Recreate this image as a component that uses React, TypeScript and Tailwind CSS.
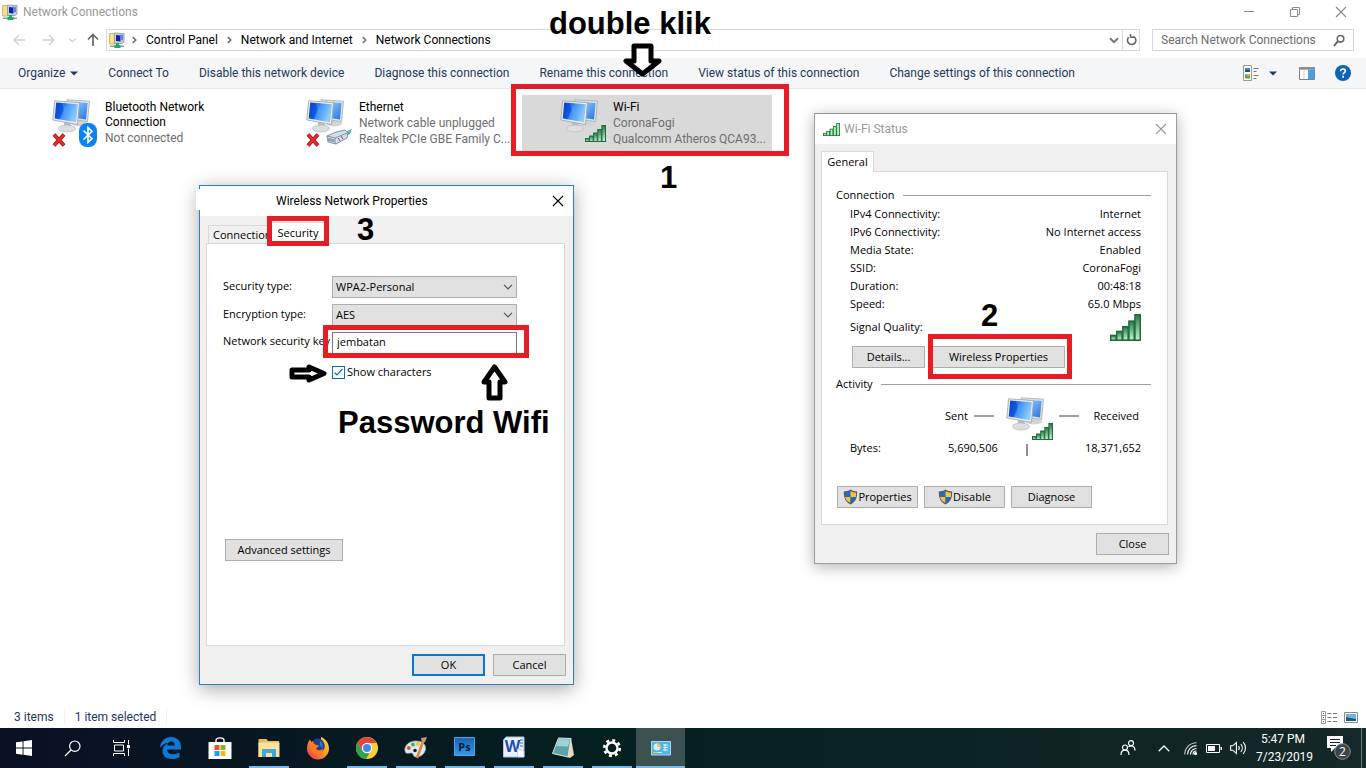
import React, { FC, ReactNode, useState } from "react";

const commands = [
  "Connect To",
  "Disable this network device",
  "Diagnose this connection",
  "Rename this connection",
  "View status of this connection",
  "Change settings of this connection",
];

const crumbs = ["Control Panel", "Network and Internet", "Network Connections"];

const statusRows = [
  ["IPv4 Connectivity:", "Internet"],
  ["IPv6 Connectivity:", "No Internet access"],
  ["Media State:", "Enabled"],
  ["SSID:", "CoronaFogi"],
  ["Duration:", "00:48:18"],
  ["Speed:", "65.0 Mbps"],
];

/* ---------- icons ---------- */

const FolderNetIcon = () => (
  <svg width="17" height="17" viewBox="0 0 17 17">
    <path d="M.5 1.500h5l1 1v9.500h-6z" fill="#f7e08b" stroke="#c9a94a" strokeWidth=".8" />
    <path d="M5.500 1l9.500.5v8.500l-2 1.500H5.500z" fill="#c9cfdc" stroke="#8790a6" strokeWidth=".8" />
    <path d="M7 3l4.500.4v6L7 9z" fill="#1422a0" />
    <path d="M11 2.500l3 .4v5l-2.500.6z" fill="#5c86dd" />
    <path d="M1 13.500h14v1.500H1z" fill="#8d9f98" />
    <path d="M7 11h3v2h1.500v3h-6v-3H7z" fill="#1fa866" />
  </svg>
);

const Monitors = () => (
  <svg width="40" height="36" viewBox="0 0 40 36">
    <defs>
      <linearGradient id="screenFront" x1="0" y1="0" x2="1" y2=".35">
        <stop offset="0" stopColor="#0a3fc0" />
        <stop offset=".42" stopColor="#0f5ae6" />
        <stop offset=".5" stopColor="#3f93fa" />
        <stop offset="1" stopColor="#8ccbff" />
      </linearGradient>
      <linearGradient id="screenBack" x1="0" y1="0" x2="1" y2="1">
        <stop offset="0" stopColor="#a5d8ff" />
        <stop offset="1" stopColor="#2474e0" />
      </linearGradient>
    </defs>
    <ellipse cx="28" cy="24.500" rx="8" ry="3" fill="#d4d4d4" />
    <path d="M15 .8L37.500 2.200L35.500 22.500L15 20z" fill="#e2e5e8" stroke="#a5a9ad" strokeWidth=".8" />
    <path d="M17 2.600l18.600 1.300L34 20.500 17 18z" fill="url(#screenBack)" />
    <path d="M12 23l7 1.500v5h-7z" fill="#b8bbbe" />
    <ellipse cx="15" cy="29.500" rx="8.500" ry="3.500" fill="#dcdedf" stroke="#b7b9ba" strokeWidth=".7" />
    <path d="M2.600 1.800L27.500 3.600 25.500 25.500.8 21z" fill="#eceeef" stroke="#9ca0a4" strokeWidth=".8" />
    <path d="M4.200 3.600l21.600 1.600-1.700 18L2.700 19.500z" fill="url(#screenFront)" />
    <path d="M10 4l4 17.500 3 .5L13.500 4.200z" fill="#5aa6ff" opacity=".4" />
  </svg>
);

const SignalBars: FC<{ width: number; height: number; small?: boolean }> = ({ width, height, small }) => (
  <svg width={width} height={height} viewBox="0 0 21 17" preserveAspectRatio="none">
    <defs>
      <linearGradient id="barFill" x1="0" y1="0" x2="0" y2="1">
        <stop offset="0" stopColor="#2a7a4b" />
        <stop offset="1" stopColor="#c5f5cf" />
      </linearGradient>
    </defs>
    {[3, 5.5, 8.5, 12, 16].map((h, i) => (
      <rect
        key={h}
        x={0.5 + i * 4.1}
        y={16.5 - h}
        width="3.6"
        height={h}
        fill={small ? "#a9f0b5" : "url(#barFill)"}
        stroke="#1d6b3c"
        strokeWidth="1"
      />
    ))}
  </svg>
);

const RedCross = () => (
  <svg width="14" height="14" viewBox="0 0 14 14">
    <path d="M2 1.500L12 12.500M12 1.500L2 12.500" stroke="#8f0d12" strokeWidth="3.800" />
    <path d="M2 1.500L12 12.500M12 1.500L2 12.500" stroke="#ec2a2a" strokeWidth="2.600" />
  </svg>
);

const BluetoothIcon = () => (
  <svg width="18" height="24" viewBox="0 0 18 24">
    <rect width="18" height="24" rx="8" fill="#0a84f4" />
    <path d="M4.500 7.500l8.500 8.200-4 3.800v-15l4 3.800L4.500 16.500" fill="none" stroke="#fff" strokeWidth="1.600" />
  </svg>
);

const PlugIcon = () => (
  <svg width="27" height="17" viewBox="0 0 27 17">
    <path d="M17 5l9-4-2 5-5 2z" fill="#4fb1d8" />
    <path d="M1 8l9-4 9-2 3 3-1 5-11 6-8-2z" fill="#d5dde6" stroke="#76879c" strokeWidth=".9" />
    <path d="M1 8l8 2 12-5M9 10v6" fill="none" stroke="#76879c" strokeWidth=".9" />
    <path d="M3 10v3M5 10.500v3M7 11v3M12 10l2 3M15 8l2 3" stroke="#4c6079" strokeWidth="1" />
  </svg>
);

const Shield = () => (
  <svg width="15" height="16" viewBox="0 0 15 16">
    <path d="M7.500.5C5.500 2 3 2.400.8 2.400 .6 8.500 2.500 13 7.500 15.500 12.500 13 14.400 8.500 14.200 2.400 12 2.400 9.500 2 7.500.5z" fill="#595959" />
    <path d="M7.500 2v6H2.100C1.800 6.500 1.900 5 2 3.600 4 3.500 6 3 7.500 2z" fill="#1770c4" />
    <path d="M7.500 2v6h5.400c.3-1.500.2-3 .1-4.400C11 3.500 9 3 7.500 2z" fill="#f9c13c" />
    <path d="M7.500 14V8H2.100c.5 2.600 2.200 4.600 5.400 6z" fill="#f9c13c" />
    <path d="M7.500 14V8h5.400c-.5 2.600-2.200 4.600-5.400 6z" fill="#1770c4" />
  </svg>
);

const Chevron: FC<{ className?: string }> = ({ className }) => (
  <svg className={className} width="10" height="6" viewBox="0 0 10 6">
    <path d="M1 .8l4 4 4-4" fill="none" stroke="currentColor" strokeWidth="1.200" />
  </svg>
);

const CrossIcon = () => (
  <svg width="12" height="12" viewBox="0 0 12 12">
    <path d="M1 1l10 10M11 1L1 11" stroke="currentColor" strokeWidth="1.100" />
  </svg>
);

const BlockArrow: FC<{ width: number; height: number; d: string }> = ({ width, height, d }) => (
  <svg width={width} height={height} viewBox={`0 0 ${width} ${height}`}>
    <path d={d} fill="#fff" stroke="#000" strokeWidth="5" strokeLinejoin="round" />
  </svg>
);

/* ---------- small parts ---------- */

const PushButton: FC<{ children: ReactNode; className?: string }> = ({ children, className }) => (
  <button
    type="button"
    className={`flex h-[22px] items-center justify-center bg-[#e1e1e1] text-black ${className}`}
  >
    {children}
  </button>
);

const Connection: FC<{ name: string; lines: string[]; active?: boolean; badge: ReactNode }> = ({
  name,
  lines,
  active,
  badge,
}) => (
  <li className={`flex h-14 w-[250px] ${active ? "bg-[#d9d9d9]" : ""}`}>
    <div className="relative ml-[38px] mt-1 h-12 w-[53px] shrink-0">
      <Monitors />
      {badge}
    </div>
    <div className="mt-[5px] leading-4">
      <p className="pr-10 leading-[15px] text-black">{name}</p>
      {lines.map((line) => (
        <p key={line} className="whitespace-nowrap text-[#6d6d6d]">
          {line}
        </p>
      ))}
    </div>
  </li>
);

const Group: FC<{ title: string }> = ({ title }) => (
  <div className="mr-4 ml-[14px] flex items-center gap-2">
    <span>{title}</span>
    <span className="h-px grow bg-[#a0a0a0]" />
  </div>
);

/* ---------- explorer window ---------- */

const Explorer = () => (
  <main className="flex grow flex-col">
    <header className="flex h-6 items-center">
      <span className="ml-[2px]">
        <FolderNetIcon />
      </span>
      <h1 className="ml-1 grow text-[#999]">Network Connections</h1>
      <div className="mr-[19px] flex items-center gap-[34px] text-[#8a8a8a]">
        <button type="button" aria-label="Minimize">
          <svg width="12" height="12" viewBox="0 0 12 12">
            <path d="M1 5.500h10" stroke="currentColor" />
          </svg>
        </button>
        <button type="button" aria-label="Restore">
          <svg width="12" height="12" viewBox="0 0 12 12">
            <path d="M1.500 3.500h7v7h-7zM3.500 3.500v-2h7v7h-2" fill="none" stroke="currentColor" />
          </svg>
        </button>
        <button type="button" aria-label="Close">
          <CrossIcon />
        </button>
      </div>
    </header>

    <nav className="mt-[5px] flex h-[22px] items-center pr-3">
      <div className="flex w-[106px] items-center pl-3">
        <button type="button" aria-label="Back" className="text-[#d0d0d0]">
          <svg width="14" height="12" viewBox="0 0 14 12">
            <path d="M13 6H2M7 1L2 6l5 5" fill="none" stroke="currentColor" strokeWidth="1.300" />
          </svg>
        </button>
        <button type="button" aria-label="Forward" className="ml-4 text-[#d0d0d0]">
          <svg width="14" height="12" viewBox="0 0 14 12">
            <path d="M1 6h11M7 1l5 5-5 5" fill="none" stroke="currentColor" strokeWidth="1.300" />
          </svg>
        </button>
        <button type="button" aria-label="Recent locations" className="ml-[13px] text-[#d0d0d0]">
          <svg width="7" height="5" viewBox="0 0 7 5">
            <path d="M.5.800l3 3 3-3" fill="none" stroke="currentColor" strokeWidth="1.300" />
          </svg>
        </button>
        <button type="button" aria-label="Up" className="ml-[11px] text-[#666]">
          <svg width="12" height="14" viewBox="0 0 12 14">
            <path d="M6 13V2M1 6.500L6 1.500l5 5" fill="none" stroke="currentColor" strokeWidth="1.700" />
          </svg>
        </button>
      </div>
      <div className="flex h-full grow items-center border border-[#d9d9d9] text-black">
        <span className="ml-[2px]">
          <FolderNetIcon />
        </span>
        {crumbs.map((crumb) => (
          <span key={crumb} className="flex items-center">
            <svg className="ml-[6px] text-[#666]" width="5" height="8" viewBox="0 0 5 8">
              <path d="M.8 1l3 3-3 3" fill="none" stroke="currentColor" strokeWidth="1.400" />
            </svg>
            <a href="#" className="ml-[9px] mr-[3px]">
              {crumb}
            </a>
          </span>
        ))}
        <button type="button" aria-label="Previous locations" className="ml-auto mr-[3px] text-[#777]">
          <svg width="10" height="7" viewBox="0 0 10 7">
            <path d="M1 1.200l4 4 4-4" fill="none" stroke="currentColor" strokeWidth="2" />
          </svg>
        </button>
        <button
          type="button"
          aria-label="Refresh"
          className="flex h-full w-[17px] items-center justify-center border-l border-[#d9d9d9] text-[#666]"
        >
          <svg width="11" height="12" viewBox="0 0 11 12">
            <path d="M2.600 3.400A4.200 4.200 0 1 0 7.500 2.500" fill="none" stroke="currentColor" strokeWidth="1.600" />
            <path d="M9.500.5H5.800v4" fill="none" stroke="currentColor" strokeWidth="1.500" transform="rotate(-90 6.500 2.500)" />
          </svg>
        </button>
      </div>
      <div className="ml-3 flex h-full w-[202px] items-center border border-[#d9d9d9] pr-2">
        <input
          type="text"
          aria-label="Search"
          placeholder="Search Network Connections"
          className="w-full min-w-0 grow pl-2 outline-none placeholder:text-[#6d6d6d]"
        />
        <svg className="shrink-0 text-[#666]" width="12" height="13" viewBox="0 0 12 13">
          <circle cx="7.500" cy="4.800" r="3.300" fill="none" stroke="currentColor" strokeWidth="1.600" />
          <path d="M5 7.200L1 11.800" stroke="currentColor" strokeWidth="2" />
        </svg>
      </div>
    </nav>

    <div className="mt-[7px] flex h-[31px] items-center gap-[30px] border-b border-[#e4e6e8] bg-[#f5f6f7] pl-[18px] pr-[15px] whitespace-nowrap text-[#1e395b]">
      <button type="button" className="flex items-center gap-[5px]">
        Organize
        <svg width="8" height="5" viewBox="0 0 8 5">
          <path d="M0 .5h8L4 4.500z" fill="#1e395b" />
        </svg>
      </button>
      {commands.map((command) => (
        <button key={command} type="button">
          {command}
        </button>
      ))}
      <div className="ml-auto flex items-center">
        <button type="button" aria-label="Change your view" className="flex items-center">
          <svg width="16" height="16" viewBox="0 0 16 16">
            <path d="M.5.5h8v15h-8z" fill="#fff" stroke="#999" />
            <path d="M2 3h5v4H2z" fill="#3a86c8" />
            <path d="M2 5h5v2H2z" fill="#1b4f7e" />
            <path d="M2 9.500h5v4H2z" fill="#4ea24b" />
            <path d="M4 9.500h3v2H4z" fill="#e0a03d" />
            <path d="M10.500 3.500h5M10.500 6.500h3M10.500 10.500h5M10.500 13.500h3" stroke="#777" />
          </svg>
          <svg className="ml-[10px]" width="8" height="5" viewBox="0 0 8 5">
            <path d="M0 .5h8L4 4.500z" fill="#1e395b" />
          </svg>
        </button>
        <button type="button" aria-label="Show the preview pane" className="ml-[22px]">
          <svg width="16" height="13" viewBox="0 0 16 13">
            <path d="M.5.5h15v12H.5z" fill="#fff" stroke="#808080" />
            <path d="M0 0h16v2.500H0zM5 2v10" fill="#8b8b8b" stroke="#999" strokeWidth=".5" />
            <path d="M9 2.500h6.500V12H9z" fill="#47a0e8" />
          </svg>
        </button>
        <button type="button" aria-label="Get help" className="ml-5">
          <svg width="16" height="16" viewBox="0 0 16 16">
            <circle cx="8" cy="8" r="8" fill="#0b64b8" />
            <path d="M5.600 6.200C5.600 4.700 6.600 4 8 4s2.400.800 2.400 2c0 1.600-2.300 1.700-2.300 3.500M8.100 10.800v1.900" fill="none" stroke="#fff" strokeWidth="1.700" />
          </svg>
        </button>
      </div>
    </div>

    <ul className="mt-[6px] ml-[14px] flex grow gap-1">
      <Connection
        name="Bluetooth Network Connection"
        lines={["Not connected"]}
        badge={
          <>
            <span className="absolute left-0 top-[34px]">
              <RedCross />
            </span>
            <span className="absolute left-[27px] top-6">
              <BluetoothIcon />
            </span>
          </>
        }
      />
      <Connection
        name="Ethernet"
        lines={["Network cable unplugged", "Realtek PCIe GBE Family C..."]}
        badge={
          <>
            <span className="absolute left-0 top-[34px]">
              <RedCross />
            </span>
            <span className="absolute left-[20px] top-[29px]">
              <PlugIcon />
            </span>
          </>
        }
      />
      <Connection
        active
        name="Wi-Fi"
        lines={["CoronaFogi", "Qualcomm Atheros QCA93..."]}
        badge={
          <span className="absolute left-[25px] top-[26px]">
            <SignalBars width={21} height={17} />
          </span>
        }
      />
    </ul>

    <footer className="flex h-[22px] items-center pl-[14px] pr-2 text-[#1e395b]">
      <span className="border-r border-[#f0f0f0] pr-[10px]">3 items</span>
      <span className="border-r border-[#f0f0f0] px-[10px]">1 item selected</span>
      <div className="ml-auto flex items-center gap-[7px]">
        <button type="button" aria-label="Details view">
          <svg width="16" height="13" viewBox="0 0 16 13">
            <path d="M.5.5h4v12h-4zM.500 4.500h4M.500 8.500h4" fill="none" stroke="#999" />
            <path d="M6.500 2.500h4M12 2.500h4M6.500 6.500h4M12 6.500h4M6.500 10.500h4M12 10.500h4" stroke="#777" />
            <path d="M2 2h1v1H2zM2 6h1v1H2zM2 10h1v1H2z" fill="#555" />
          </svg>
        </button>
        <button type="button" aria-label="Large icons view">
          <svg width="14" height="11" viewBox="0 0 14 11">
            <path d="M.5.5h13v10H.5z" fill="#fff" stroke="#8a8a8a" />
            <path d="M2 2h10v7H2z" fill="#6db3e4" />
            <path d="M2 5l4 1 6 1v2H2z" fill="#1d5878" />
          </svg>
        </button>
      </div>
    </footer>
  </main>
);

/* ---------- dialogs ---------- */

const WifiStatus = () => (
  <section className="absolute left-[814px] top-[113px] w-[363px] border border-[#9b9b9b] bg-[#f0f0f0] font-['Open_Sans',sans-serif] text-[11px] text-black shadow-[0_3px_14px_rgba(0,0,0,0.3)]">
    <header className="flex h-[30px] items-center bg-white pl-2 pr-[9px] font-[Roboto,sans-serif] text-xs text-[#999]">
      <SignalBars width={17} height={13} small />
      <h2 className="ml-1 grow">Wi-Fi Status</h2>
      <button type="button" aria-label="Close Wi-Fi Status">
        <CrossIcon />
      </button>
    </header>
    <div className="pr-[7px] pl-[6px] pt-[7px]">
      <button
        type="button"
        className="relative -mb-px flex h-[21px] w-[53px] items-center justify-center border border-b-0 border-[#d9d9d9] bg-white"
      >
        General
      </button>
      <div className="mr-px h-[354px] border border-[#d9d9d9] bg-white pt-[14px] leading-[18px]">
        <Group title="Connection" />
        <dl className="mt-px ml-7 mr-[26px]">
          {statusRows.map(([label, value]) => (
            <div key={label} className="flex justify-between">
              <dt>{label}</dt>
              <dd>{value}</dd>
            </div>
          ))}
          <div className="flex h-7 items-center justify-between">
            <dt>Signal Quality:</dt>
            <dd>
              <SignalBars width={31} height={27} />
            </dd>
          </div>
        </dl>
        <div className="mt-[5px] ml-[30px] flex gap-[7px]">
          <PushButton className="w-[73px] border border-[#adadad]">Details...</PushButton>
          <PushButton className="w-[133px] border border-[#adadad]">Wireless Properties</PushButton>
        </div>
        <div className="mt-[7px]">
          <Group title="Activity" />
        </div>
        <div className="ml-[123px] mr-7 flex h-[46px] items-center">
          <span>Sent</span>
          <span className="ml-[6px] h-0.5 w-5 bg-[#a0a0a0]" />
          <span className="relative ml-3 mt-1 h-[43px] w-[53px]">
            <Monitors />
            <span className="absolute left-[26px] top-[26px]">
              <SignalBars width={21} height={17} />
            </span>
          </span>
          <span className="h-0.5 w-5 bg-[#a0a0a0]" />
          <span className="ml-auto">Received</span>
        </div>
        <div className="ml-7 mr-[26px] flex items-center">
          <span className="w-[98px]">Bytes:</span>
          <span>5,690,506</span>
          <span className="ml-7 mt-1 h-3 w-0.5 bg-[#909090]" />
          <span className="ml-auto">18,371,652</span>
        </div>
        <div className="mt-[29px] ml-[15px] flex gap-[6px]">
          <PushButton className="w-[81px] border border-[#adadad]">
            <Shield />
            Properties
          </PushButton>
          <PushButton className="w-[81px] border border-[#adadad]">
            <Shield />
            Disable
          </PushButton>
          <PushButton className="w-[81px] border border-[#adadad]">Diagnose</PushButton>
        </div>
      </div>
      <div className="flex justify-end py-2">
        <PushButton className="w-[73px] border border-[#adadad]">Close</PushButton>
      </div>
    </div>
  </section>
);

const WirelessProperties = () => {
  const [show, setShow] = useState<boolean>(true);
  const [key, setKey] = useState<string>("jembatan");

  return (
    <section className="absolute left-[199px] top-[185px] w-[375px] border border-[#2f7fb8] bg-[#f0f0f0] font-['Open_Sans',sans-serif] text-[11px] text-black shadow-[0_4px_18px_rgba(0,0,0,0.35)]">
      <span className="absolute -left-1 top-[3px] h-[21px] w-2 bg-white" />
      <header className="flex h-[30px] items-center bg-white pl-[76px] pr-[9px] font-[Roboto,sans-serif] text-xs">
        <h2 className="grow">Wireless Network Properties</h2>
        <button type="button" aria-label="Close Wireless Network Properties">
          <CrossIcon />
        </button>
      </header>
      <div className="pr-[7px] pl-[6px] pt-[6px]">
        <div className="relative -mb-px flex items-end pl-[2px]">
          <button
            type="button"
            className="h-[19px] w-[60px] border border-b-0 border-[#d9d9d9] pl-1 text-left"
          >
            Connection
          </button>
          <button type="button" className="h-[22px] w-[60px] border border-b-0 border-[#d9d9d9] bg-white">
            Security
          </button>
        </div>
        <div className="mr-px flex h-[403px] flex-col border border-[#d9d9d9] bg-white pl-4 pt-8">
          <div className="grid grid-cols-[109px_185px] items-center gap-y-[6px]">
            <label htmlFor="securityType" className="pb-[2px]">
              Security type:
            </label>
            <div className="relative h-[22px]">
              <select
                id="securityType"
                className="h-full w-full appearance-none border border-[#adadad] bg-[#e1e1e1] pl-[3px]"
              >
                <option>WPA2-Personal</option>
              </select>
              <Chevron className="pointer-events-none absolute right-1 top-2 text-[#555]" />
            </div>
            <label htmlFor="encryptionType" className="pb-[2px]">
              Encryption type:
            </label>
            <div className="relative h-[22px]">
              <select
                id="encryptionType"
                className="h-full w-full appearance-none border border-[#adadad] bg-[#e1e1e1] pl-[3px]"
              >
                <option>AES</option>
              </select>
              <Chevron className="pointer-events-none absolute right-1 top-2 text-[#555]" />
            </div>
            <label htmlFor="networkKey" className="pb-[3px] whitespace-nowrap">
              Network security key
            </label>
            <input
              id="networkKey"
              type={show ? "text" : "password"}
              value={key}
              onChange={(e) => setKey(e.target.value)}
              className="h-[22px] border border-[#7a7a7a] bg-white pb-[4px] pl-1 outline-none"
            />
          </div>
          <label className="ml-[109px] mt-2 flex h-5 items-center gap-[2px]">
            <span className="relative h-[13px] w-[13px]">
              <input
                type="checkbox"
                checked={show}
                onChange={(e) => setShow(e.target.checked)}
                className="block h-[13px] w-[13px] appearance-none border border-[#0a6cbe] bg-white"
              />
              {show && (
                <svg className="pointer-events-none absolute left-0 top-0" width="13" height="13" viewBox="0 0 13 13">
                  <path d="M2.500 6.500L5 9l5.500-6" fill="none" stroke="#0a6cbe" strokeWidth="1.200" />
                </svg>
              )}
            </span>
            Show characters
          </label>
          <PushButton className="mt-auto mb-[84px] ml-[2px] w-[118px] border border-[#adadad]">
            Advanced settings
          </PushButton>
        </div>
        <div className="flex justify-end gap-2 py-2">
          <PushButton className="w-[73px] border-2 border-[#0a78d2]">OK</PushButton>
          <PushButton className="w-[73px] border border-[#adadad]">Cancel</PushButton>
        </div>
      </div>
    </section>
  );
};

/* ---------- tutorial marks drawn over the windows ---------- */

const Marks = () => (
  <div className="pointer-events-none absolute inset-0 font-['Liberation_Sans',sans-serif] text-[31px] leading-8 font-bold whitespace-nowrap text-black">
    <span className="absolute left-[511px] top-[84px] h-[72px] w-[278px] border-5 border-[#e81c24]" />
    <span className="absolute left-[267px] top-[216px] h-[30px] w-[62px] border-5 border-[#e81c24]" />
    <span className="absolute left-[323px] top-[325px] h-[33px] w-[206px] border-5 border-[#e81c24]" />
    <span className="absolute left-[928px] top-[334px] h-[45px] w-[144px] border-5 border-[#e81c24]" />
    <span className="absolute left-[549px] top-2">double klik</span>
    <span className="absolute left-[660px] top-[162px]">1</span>
    <span className="absolute left-[981px] top-[300px]">2</span>
    <span className="absolute left-[357px] top-[214px]">3</span>
    <span className="absolute left-[338px] top-[407px]">Password Wifi</span>
    <span className="absolute left-[623px] top-[43px]">
      <BlockArrow width={39} height={34} d="M11 3h17v15h8L19.500 31 3 18h8z" />
    </span>
    <span className="absolute left-[289px] top-[364px]">
      <BlockArrow width={38} height={19} d="M3 6h17V3l15 6.500L20 16v-3H3z" />
    </span>
    <span className="absolute left-[481px] top-[364px]">
      <BlockArrow width={27} height={37} d="M13.500 3L24 18h-5v16H8V18H3z" />
    </span>
  </div>
);

/* ---------- taskbar ---------- */

const apps: { name: string; running?: boolean; active?: boolean; icon: ReactNode }[] = [
  {
    name: "Edge",
    icon: (
      <path
        d="M1 12C1.500 5 6 1 12 1c6.500 0 10 4.500 10 10v2.500H8c.2 3.500 3 4.700 6 4.700 2.500 0 4.800-.7 6.500-1.700v4.700c-2 1.200-4.500 1.800-7.500 1.800C7 23 3.500 19.500 3.500 15c0-3.500 2-6.500 5.500-8C5.500 7 3 9 1 12zm7.200-2.500h7.600C15.800 7 14.500 5.500 12.200 5.500 10 5.500 8.500 7.200 8.200 9.500z"
        fill="#0a7bd8"
      />
    ),
  },
  {
    name: "Store",
    icon: (
      <>
        <path d="M8 7V4.500C8 1 16 1 16 4.500V7" fill="none" stroke="#fff" strokeWidth="1.400" />
        <path d="M.5 6h23v17H.500z" fill="#fff" />
        <path d="M6.500 9h5v5h-5z" fill="#f0502a" />
        <path d="M12.500 9h5v5h-5z" fill="#7db82a" />
        <path d="M6.500 15h5v5h-5z" fill="#15a0e8" />
        <path d="M12.500 15h5v5h-5z" fill="#fdb813" />
      </>
    ),
  },
  {
    name: "File Explorer",
    running: true,
    icon: (
      <>
        <path d="M1.500 3h8l1.500 2h11v16h-20.500z" fill="#e8bd54" />
        <path d="M1.500 6.500h21V21h-21z" fill="#fbe199" />
        <path d="M5 13h14v8h-4v-4H9v4H5z" fill="#3fa8dc" />
      </>
    ),
  },
  {
    name: "Firefox",
    icon: (
      <>
        <defs>
          <linearGradient id="foxFill" x1="1" y1="0" x2="0" y2="1">
            <stop offset="0" stopColor="#ffe23a" />
            <stop offset=".45" stopColor="#ff9a1c" />
            <stop offset="1" stopColor="#f0235c" />
          </linearGradient>
        </defs>
        <path d="M15 1c5 2 8 6.500 8 11.500a11 11 0 0 1-22 0C1 8 2.500 5 4 3.500L5.500 6C8 4 12 4 15 5z" fill="url(#foxFill)" />
        <path d="M7 4.500C10 1.500 14 2 16 4c3 3 3.500 7 1.500 10-2 3-7 3-9 0z" fill="#213f8f" />
        <path d="M14 5c3 2 3.500 5 2 8 0-2-1-3-2-4z" fill="#3b78d8" />
        <path d="M4 7c2-1 4 0 6 2l3 .5c0 1.500-2 2-3 2.500 1 3 5 2.500 7 .5 0 4-4 6-7 5.500C6 17 4 13 4 7z" fill="#fb7a1c" />
      </>
    ),
  },
  {
    name: "Chrome",
    running: true,
    icon: (
      <>
        <circle cx="12" cy="12" r="11" fill="#f9cf3e" />
        <path d="M2.500 6.500A11 11 0 0 1 21.600 7H12l-4.500 8z" fill="#e2463a" />
        <path d="M2.500 6.500L7.200 14.500 12 12l2 6-3 5A11 11 0 0 1 2.500 6.500z" fill="#2da34f" />
        <circle cx="12" cy="12" r="5.200" fill="#fff" />
        <circle cx="12" cy="12" r="4" fill="#4a86ea" />
      </>
    ),
  },
  {
    name: "Paint",
    running: true,
    icon: (
      <>
        <path d="M1 15C0 9 6 5 12 5s10 3 9.500 8c-.5 5-5 8-9.500 8-3 0-2-3.500-4.500-4S2 19 1 15z" fill="#dce9f2" stroke="#9eb6c6" strokeWidth=".7" />
        <circle cx="4.800" cy="12" r="1.900" fill="#d9542c" />
        <circle cx="9" cy="8.500" r="1.900" fill="#4ba84b" />
        <circle cx="14" cy="8" r="2" fill="#f1c232" />
        <circle cx="11" cy="14.500" r="1.800" fill="#0b1f26" />
        <path d="M20 3L13 22" stroke="#d98b3c" strokeWidth="2.600" />
        <path d="M17 2l6-1-2 5-3 1z" fill="#c59b72" />
      </>
    ),
  },
  {
    name: "Photoshop",
    running: true,
    icon: (
      <>
        <defs>
          <linearGradient id="psFill" x1="0" y1="0" x2="0" y2="1">
            <stop offset="0" stopColor="#1c62b0" />
            <stop offset="1" stopColor="#2f9bea" />
          </linearGradient>
        </defs>
        <path d="M1.500 1.500h20v18h-20z" fill="url(#psFill)" stroke="#4aa4ec" />
        <text x="11.500" y="15" textAnchor="middle" fontSize="11" fontWeight="700" fill="#061a33">
          Ps
        </text>
      </>
    ),
  },
  {
    name: "Word",
    running: true,
    icon: (
      <>
        <path d="M4 1h18v20H1.500V4z" fill="#eaf1fb" stroke="#a9c3e6" />
        <path d="M18 4h3M18 7h3M18 10h3" stroke="#3a6dbd" />
        <text x="10.500" y="16" textAnchor="middle" fontSize="16" fontWeight="700" fill="#1c4fae">
          W
        </text>
        <path d="M15 13l7 2v6h-6z" fill="#fff" stroke="#a9c3e6" strokeWidth=".7" />
      </>
    ),
  },
  {
    name: "Notepad",
    running: true,
    icon: (
      <>
        <path d="M20 2l3 17-4 3-3-1z" fill="#e9d9b8" />
        <path d="M7.500 2l12.500.500L17 21 1.500 17.500z" fill="#5fa3a9" stroke="#d4ecec" />
        <path d="M8 3l11 .5-2 7-12-.500z" fill="#9dd3d6" />
      </>
    ),
  },
  {
    name: "Settings",
    running: true,
    icon: (
      <>
        <circle cx="12" cy="12" r="5.500" fill="none" stroke="#fff" strokeWidth="2.400" />
        <circle cx="12" cy="12" r="7.800" fill="none" stroke="#fff" strokeWidth="2.600" strokeDasharray="3 3.126" />
      </>
    ),
  },
  {
    name: "Control Panel",
    running: true,
    active: true,
    icon: (
      <>
        <path d="M2.500 5.500h19v13.500h-19z" fill="#4fb4e8" stroke="#a8dcf6" />
        <circle cx="8" cy="11" r="3.500" fill="#d8f0fc" />
        <path d="M8 11V7.500a3.500 3.500 0 0 1 3.500 3.500z" fill="#f2c84b" />
        <path d="M14 9h5M14 11.500h5M14 14h5M16 8v7" stroke="#d8f0fc" strokeWidth="1.200" />
        <path d="M5 16.500h8" stroke="#e8f6fd" />
        <path d="M4 16.500h5" stroke="#f2c84b" />
      </>
    ),
  },
];

const Taskbar = () => (
  <footer className="flex h-10 items-stretch bg-linear-to-r from-[#0a1024] via-[#04201f] via-45% to-[#142827] font-['Open_Sans',sans-serif] text-white">
    <button type="button" aria-label="Start" className="flex w-12 items-center justify-center">
      <svg width="16" height="16" viewBox="0 0 16 16">
        <path d="M0 2.300L6.600 1.400v6.200H0zM7.500 1.200L16 0v7.600H7.500zM0 8.500h6.600v6.200L0 13.800zM7.500 8.500H16V16l-8.500-1.200z" fill="#fff" />
      </svg>
    </button>
    <button type="button" aria-label="Search Windows" className="flex w-12 items-center justify-center">
      <svg width="17" height="17" viewBox="0 0 17 17">
        <circle cx="10.800" cy="6.200" r="5.200" fill="none" stroke="#fff" strokeWidth="1.200" />
        <path d="M7 10L1 16" stroke="#fff" strokeWidth="1.300" />
      </svg>
    </button>
    <button type="button" aria-label="Task View" className="flex w-[50px] items-center justify-center">
      <svg width="17" height="16" viewBox="0 0 17 16">
        <path d="M.5 0v2.500h11V0M.5 16v-2.500h11V16M1.500 5h9v6h-9z" fill="none" stroke="#fff" />
        <path d="M15.500 0v4.500M15.500 8.500V16" stroke="#fff" />
        <path d="M14 5h3v3h-3z" fill="#fff" />
      </svg>
    </button>
    {apps.map((app) => (
      <button
        key={app.name}
        type="button"
        aria-label={app.name}
        className={`flex w-[49px] flex-col items-center justify-between pt-2 ${app.active ? "bg-[#3d5151]" : ""}`}
      >
        <svg width="24" height="24" viewBox="0 0 24 24">
          {app.icon}
        </svg>
        {app.running && <span className={`h-[2px] bg-[#76b9ed] ${app.active ? "w-full" : "w-10"}`} />}
      </button>
    ))}
    <div className="ml-auto flex items-center">
      <button type="button" aria-label="People">
        <svg width="16" height="16" viewBox="0 0 16 16" fill="none" stroke="#fff" strokeWidth="1.200">
          <circle cx="5" cy="7.500" r="2.500" />
          <path d="M1 15c0-6.500 8-6.500 8 0" />
          <circle cx="11" cy="3.200" r="2.500" />
          <path d="M8.500 6.800C11 5 15 6 15 10.500" />
        </svg>
      </button>
      <button type="button" aria-label="Show hidden icons" className="ml-[22px]">
        <svg width="12" height="7" viewBox="0 0 12 7">
          <path d="M.7 6.300L6 1l5.300 5.300" fill="none" stroke="#fff" strokeWidth="1.300" />
        </svg>
      </button>
      <button type="button" aria-label="Network" className="ml-[14px]">
        <svg width="13" height="13" viewBox="0 0 13 13" fill="none" stroke="#fff" strokeWidth="1.100">
          <path d="M.7 12.500C.7 6 6 .700 12.500.700" opacity=".75" />
          <path d="M3.600 12.500c0-5 4-8.900 8.900-8.900M6.500 12.500c0-3.300 2.700-6 6-6" />
          <path d="M9 12.500c0-2 1.500-3.500 3.500-3.500" />
          <circle cx="11.500" cy="11.500" r="1" fill="#fff" />
        </svg>
      </button>
      <button type="button" aria-label="Battery" className="ml-[9px]">
        <svg width="16" height="9" viewBox="0 0 16 9">
          <path d="M.5.5h13v8H.5z" fill="none" stroke="#fff" />
          <path d="M2 2h7v5H2zM14.500 3H16v3h-1.500z" fill="#fff" />
        </svg>
      </button>
      <button type="button" aria-label="Volume" className="ml-2">
        <svg width="17" height="14" viewBox="0 0 17 14" fill="none" stroke="#fff" strokeWidth="1.100">
          <path d="M.6 4.800h2.200L6.400 1.500v11L2.800 9.200H.6z" />
          <path d="M8.500 5c1 1.200 1 2.800 0 4M10.800 3.200c2 2.200 2 5.400 0 7.600M13.200 1.200c3 3.300 3 8.300 0 11.600" />
        </svg>
      </button>
      <time className="ml-[9px] w-[54px] text-center font-[Roboto,sans-serif] text-xs leading-[18px]">
        <span className="block">5:47 PM</span>
        <span className="block">7/23/2019</span>
      </time>
      <button type="button" aria-label="Notifications" className="relative ml-4 mr-[10px] h-6 w-[25px]">
        <svg width="25" height="24" viewBox="0 0 25 24">
          <path d="M1 0h16v12H9l-4 4v-4H1z" fill="#fff" />
          <path d="M4 3.500h10M4 6.500h10M4 9.500h6" stroke="#17292a" />
          <circle cx="16.500" cy="15.500" r="7.800" fill="#3a4647" stroke="#8b9596" />
        </svg>
        <span className="absolute left-[13px] top-2 text-[12px] leading-4">2</span>
      </button>
      <span className="mr-1 h-full w-px bg-[#6b7878]" />
    </div>
  </footer>
);

const App = () => {
  return (
    <div className="relative flex min-h-screen flex-col overflow-hidden bg-white font-[Roboto,sans-serif] text-xs">
      <Explorer />
      <Taskbar />
      <WifiStatus />
      <WirelessProperties />
      <Marks />
    </div>
  );
};

export default App;
